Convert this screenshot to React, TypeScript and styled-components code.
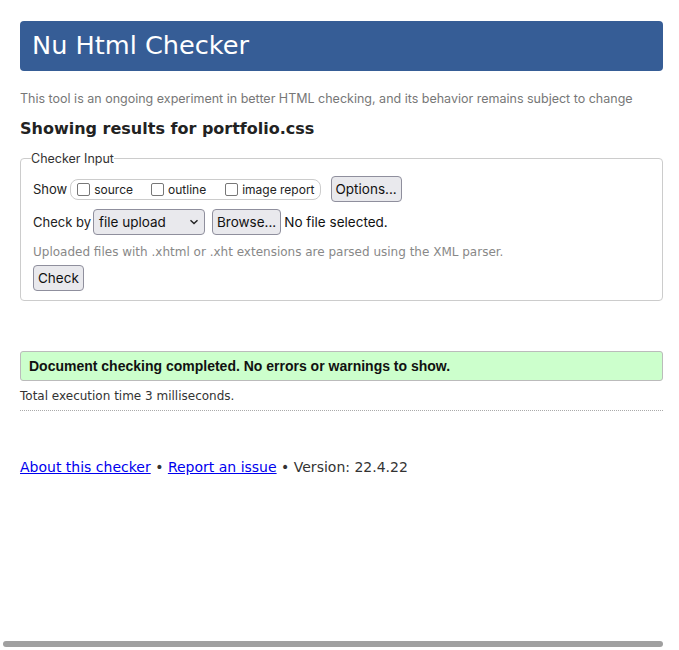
import React from "react";
import styled, { createGlobalStyle } from "styled-components";

const Global = createGlobalStyle`
  html, body { margin: 0; padding: 0; background: #fff; }
  body { font-family: "DejaVu Sans", sans-serif; color: #222; }
`;

const Page = styled.div`
  width: 643px;
  margin: 21px 0 0 20px;
  display: flex;
  flex-direction: column;
`;

const Header = styled.h1`
  margin: 0;
  height: 50px;
  box-sizing: border-box;
  background: #365d96;
  border-radius: 4px;
  color: #fff;
  font-family: "DejaVu Sans", sans-serif;
  font-weight: normal;
  font-size: 25.6px;
  line-height: 48px;
  padding: 0 12px;
`;

const Tagline = styled.p`
  margin: 20px 0 0;
  font-family: "Inter", sans-serif;
  font-size: 12.5px;
  color: #777;
  line-height: 16px;
`;

const Heading = styled.h2`
  margin: 12px 0 0;
  font-family: "DejaVu Sans", sans-serif;
  font-weight: bold;
  font-size: 16px;
  line-height: 20px;
  color: #222;
`;

const Fieldset = styled.fieldset`
  margin: 12px 0 0;
  padding: 10px 12px 9px;
  border: 1px solid #ccc;
  border-radius: 4px;
  display: flex;
  flex-direction: column;
`;

const Legend = styled.legend`
  font-family: "Inter", sans-serif;
  font-size: 12.5px;
  color: #333;
  padding: 0;
  margin-left: -2px;
`;

const Row = styled.div<{ $mt?: number }>`
  display: flex;
  align-items: center;
  gap: 3px;
  margin-top: ${(p) => p.$mt ?? 0}px;
  font-family: "Inter", sans-serif;
  font-size: 13px;
  color: #222;
`;

const OptionGroup = styled.div`
  display: flex;
  align-items: center;
  height: 21px;
  box-sizing: border-box;
  border: 1px solid #ccc;
  border-radius: 8px;
  padding: 0 5px 0 6px;
  margin-right: 7px;
`;

const CheckLabel = styled.label<{ $gap?: number }>`
  display: flex;
  align-items: center;
  gap: 4px;
  font-size: 12px;
  color: #222;
  margin-right: ${(p) => p.$gap ?? 0}px;
`;

const Box = styled.span`
  width: 11px;
  height: 11px;
  border: 1px solid #777;
  border-radius: 2px;
  background: #fff;
`;

const Button = styled.span`
  display: inline-flex;
  align-items: center;
  height: 26px;
  box-sizing: border-box;
  padding: 0 4px;
  background: #e9e9ed;
  border: 1px solid #8f8f9d;
  border-radius: 4px;
  font-family: "Inter", sans-serif;
  font-size: 13.5px;
  color: #111;
`;

const Select = styled.span`
  display: inline-flex;
  align-items: center;
  justify-content: space-between;
  width: 112px;
  height: 26px;
  box-sizing: border-box;
  padding: 0 5px;
  margin-left: -1px;
  background: #e9e9ed;
  border: 1px solid #8f8f9d;
  border-radius: 4px;
  font-family: "Inter", sans-serif;
  font-size: 13.5px;
  color: #111;
  margin-right: 4px;
`;

const NoFile = styled.span`
  font-family: "Inter", sans-serif;
  font-size: 13.5px;
  color: #111;
`;

const Hint = styled.p`
  margin: 10px 0 0;
  font-family: "DejaVu Sans", sans-serif;
  font-size: 12px;
  color: #888;
  line-height: 14px;
`;

const CheckButton = styled(Button)`
  align-self: flex-start;
  margin-top: 6px;
`;

const Success = styled.p`
  margin: 50px 0 0;
  height: 30px;
  box-sizing: border-box;
  background: #ccffcc;
  border: 1px solid #bbb;
  border-radius: 3px;
  padding: 0 8px;
  font-family: "Liberation Sans", Arial, sans-serif;
  font-weight: bold;
  font-size: 14px;
  line-height: 28px;
  color: #111;
`;

const Stats = styled.p`
  margin: 8px 0 0;
  padding-bottom: 6px;
  border-bottom: 1px dotted #aaa;
  font-family: "DejaVu Sans", sans-serif;
  font-size: 12px;
  line-height: 15px;
  color: #333;
`;

const Footer = styled.p`
  margin: 48px 0 0;
  font-family: "DejaVu Sans", sans-serif;
  font-size: 14px;
  line-height: 17px;
  color: #333;
`;

const Link = styled.a`
  color: #0000ee;
  text-decoration: underline;
`;

const ScrollThumb = styled.div`
  position: fixed;
  left: 3px;
  bottom: 3px;
  width: 660px;
  height: 6px;
  border-radius: 3px;
  background: #a0a0a0;
`;

const Chevron = () => (
  <svg width="10" height="6" viewBox="0 0 10 6">
    <path d="M1.5 1.2 L5 4.6 L8.5 1.2" fill="none" stroke="#222" strokeWidth="1.4" />
  </svg>
);

export default function App() {
  return (
    <>
      <Global />
      <Page>
        <Header>Nu Html Checker</Header>
        <Tagline>
          This tool is an ongoing experiment in better HTML checking, and its behavior remains subject to change
        </Tagline>
        <Heading>Showing results for portfolio.css</Heading>
        <Fieldset>
          <Legend>Checker Input</Legend>
          <Row>
            Show
            <OptionGroup>
              <CheckLabel $gap={18}>
                <Box />
                source
              </CheckLabel>
              <CheckLabel $gap={19}>
                <Box />
                outline
              </CheckLabel>
              <CheckLabel>
                <Box />
                image report
              </CheckLabel>
            </OptionGroup>
            <Button>Options...</Button>
          </Row>
          <Row $mt={7}>
            Check by
            <Select>
              file upload
              <Chevron />
            </Select>
            <Button>Browse...</Button>
            <NoFile>No file selected.</NoFile>
          </Row>
          <Hint>Uploaded files with .xhtml or .xht extensions are parsed using the XML parser.</Hint>
          <CheckButton>Check</CheckButton>
        </Fieldset>
        <Success>Document checking completed. No errors or warnings to show.</Success>
        <Stats>Total execution time 3 milliseconds.</Stats>
        <Footer>
          <Link href="#">About this checker</Link> • <Link href="#">Report an issue</Link> • Version: 22.4.22
        </Footer>
      </Page>
      <ScrollThumb />
    </>
  );
}
